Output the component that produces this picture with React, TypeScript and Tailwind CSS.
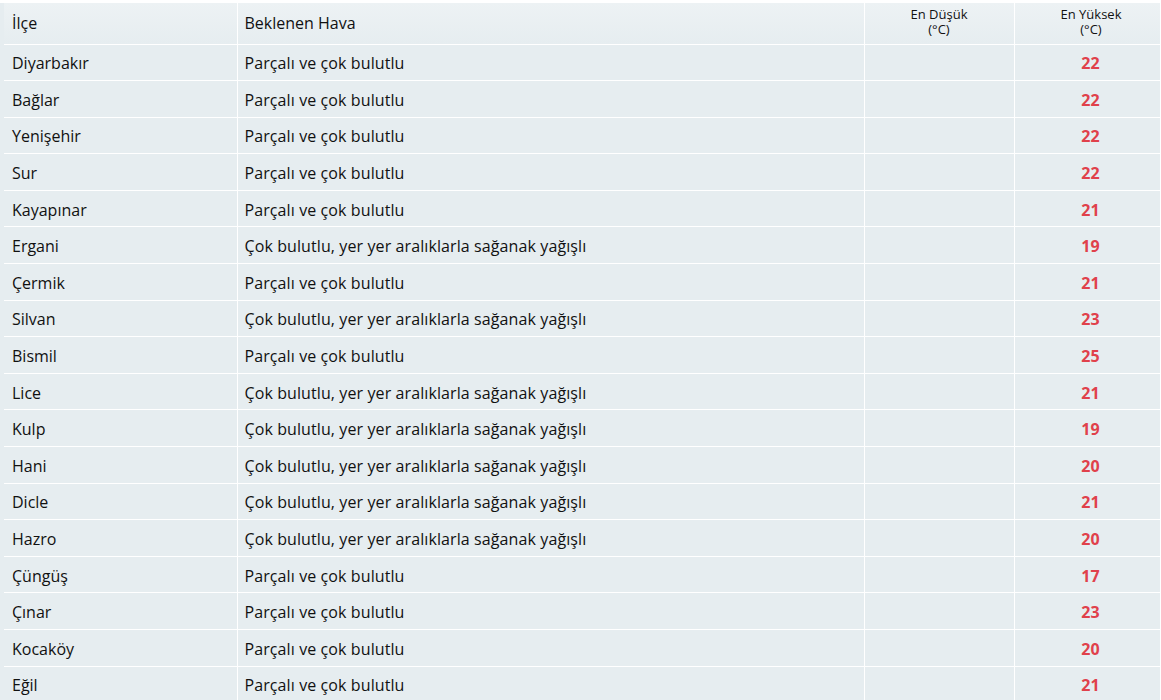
const rows: [string, string, number][] = [
  ["Diyarbakır", "Parçalı ve çok bulutlu", 22],
  ["Bağlar", "Parçalı ve çok bulutlu", 22],
  ["Yenişehir", "Parçalı ve çok bulutlu", 22],
  ["Sur", "Parçalı ve çok bulutlu", 22],
  ["Kayapınar", "Parçalı ve çok bulutlu", 21],
  ["Ergani", "Çok bulutlu, yer yer aralıklarla sağanak yağışlı", 19],
  ["Çermik", "Parçalı ve çok bulutlu", 21],
  ["Silvan", "Çok bulutlu, yer yer aralıklarla sağanak yağışlı", 23],
  ["Bismil", "Parçalı ve çok bulutlu", 25],
  ["Lice", "Çok bulutlu, yer yer aralıklarla sağanak yağışlı", 21],
  ["Kulp", "Çok bulutlu, yer yer aralıklarla sağanak yağışlı", 19],
  ["Hani", "Çok bulutlu, yer yer aralıklarla sağanak yağışlı", 20],
  ["Dicle", "Çok bulutlu, yer yer aralıklarla sağanak yağışlı", 21],
  ["Hazro", "Çok bulutlu, yer yer aralıklarla sağanak yağışlı", 20],
  ["Çüngüş", "Parçalı ve çok bulutlu", 17],
  ["Çınar", "Parçalı ve çok bulutlu", 23],
  ["Kocaköy", "Parçalı ve çok bulutlu", 20],
  ["Eğil", "Parçalı ve çok bulutlu", 21],
];

export default function App() {
  return (
    <div className="w-[1161px] h-[700px] overflow-hidden bg-white pt-[3px] font-['Open_Sans',sans-serif] text-[#111]">
      <div className="bg-[#e6edf0] pl-[4px] pr-[1px]">
        <table className="w-full border-collapse table-fixed">
          <colgroup>
            <col className="w-[233px]" />
            <col className="w-[627px]" />
            <col className="w-[150px]" />
            <col className="w-[146px]" />
          </colgroup>
          <thead>
            <tr className="h-[41px] bg-gradient-to-b from-[#edf2f4] to-[#e6edf0]">
              <th className="border-b border-white px-2 text-left text-[16px] font-normal">İlçe</th>
              <th className="border-b border-l border-white px-[7px] text-left text-[16px] font-normal">Beklenen Hava</th>
              <th className="border-b border-l border-white pb-[2px] text-center text-[13px] font-normal leading-[15px]">
                En Düşük
                <br />
                (°C)
              </th>
              <th className="border-b border-l border-r border-white pb-[2px] pl-[8px] text-center text-[13px] font-normal leading-[15px]">
                En Yüksek
                <br />
                (°C)
              </th>
            </tr>
          </thead>
          <tbody>
            {rows.map(([ilce, hava, max]) => (
              <tr key={ilce} className="h-[36.6px]">
                <td className="border-b border-white px-2 pt-[2px] text-[16px]">{ilce}</td>
                <td className="border-b border-l border-white px-[7px] pt-[2px] text-[16px] tracking-[0.1px]">{hava}</td>
                <td className="border-b border-l border-white" />
                <td className="border-b border-l border-r border-white pl-[7px] pt-[2px] text-center text-[16px] font-bold text-[#e0414b]">
                  {max}
                </td>
              </tr>
            ))}
          </tbody>
        </table>
      </div>
    </div>
  );
}
